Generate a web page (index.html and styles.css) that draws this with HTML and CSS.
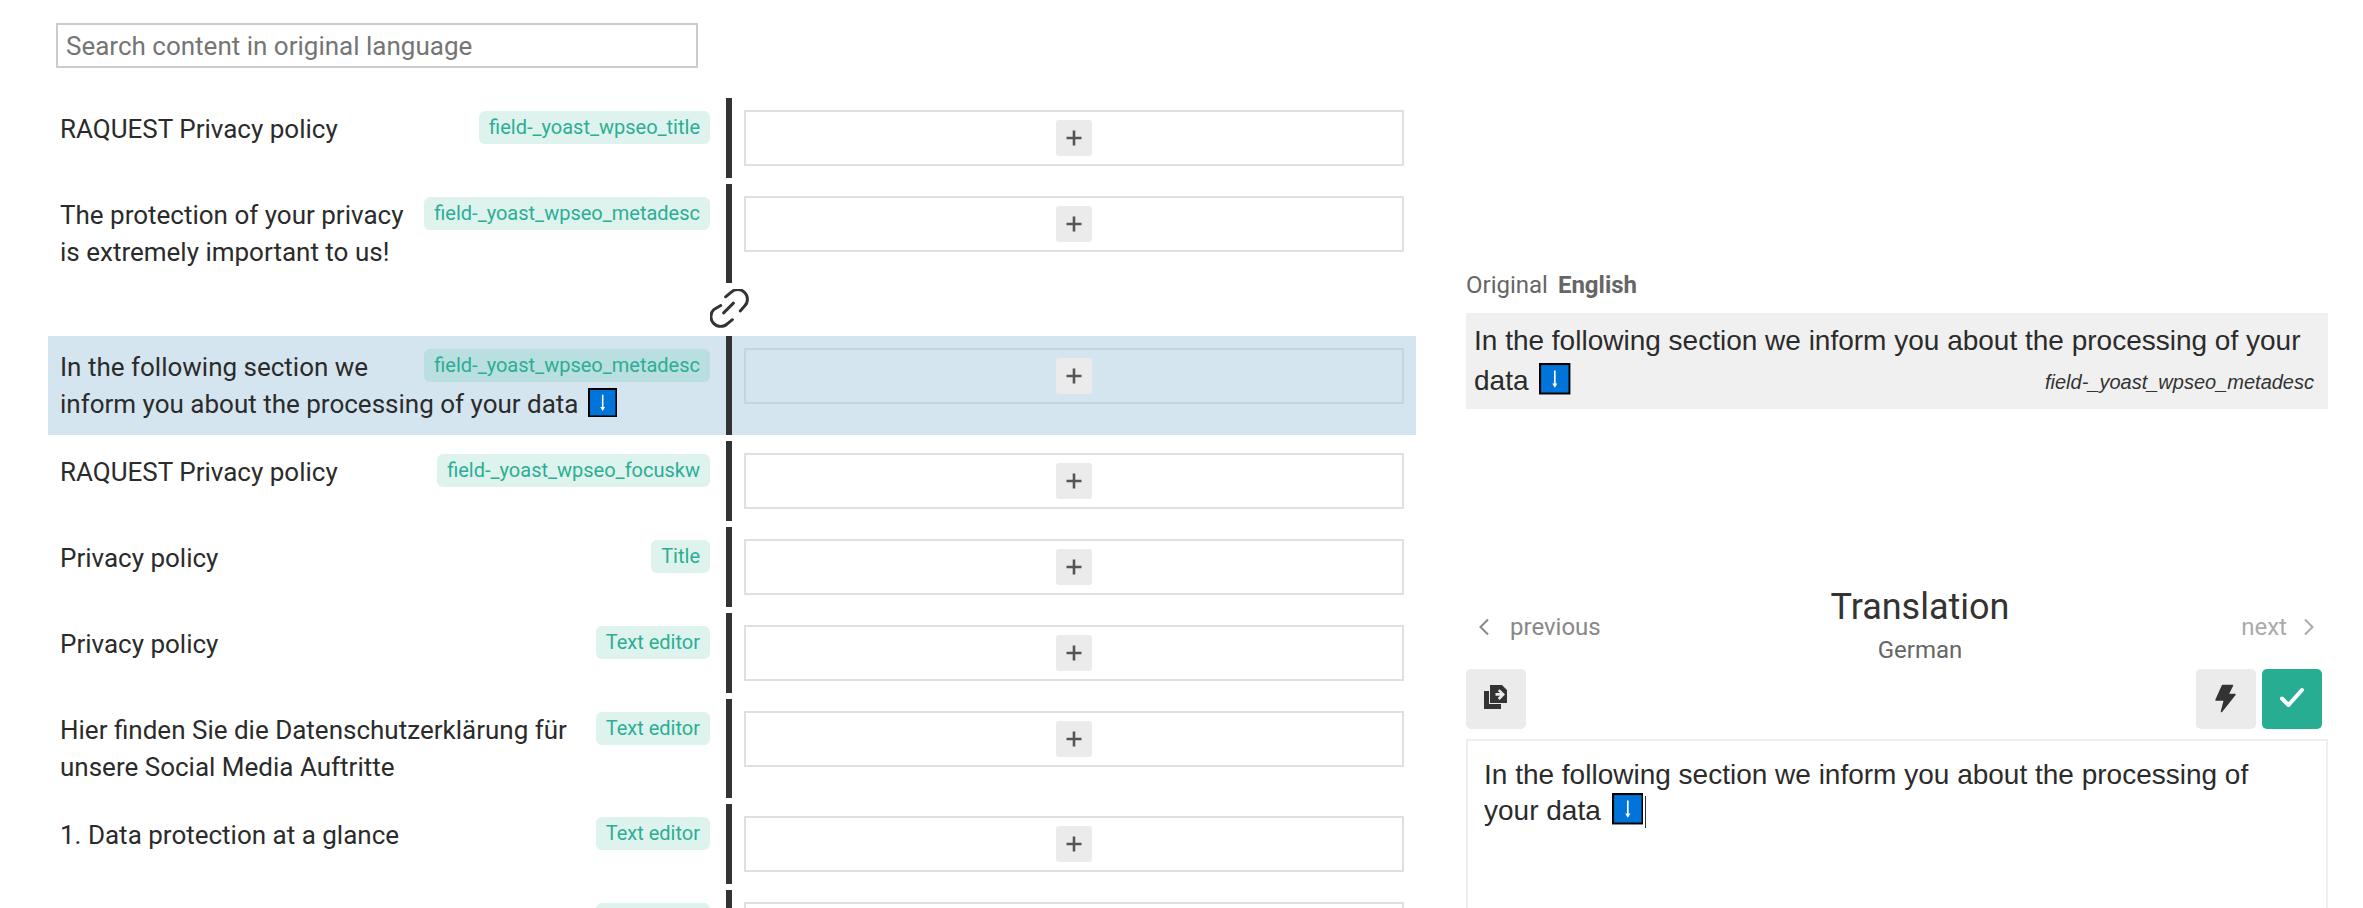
FILE: index.html
```html
<!DOCTYPE html>
<html lang="en">
<head>
<meta charset="utf-8">
<title>Translation editor</title>
<link rel="stylesheet" href="styles.css">
</head>
<body>
<svg class="sprite" width="0" height="0">
  <symbol id="key" viewBox="0 0 30 30">
    <rect x="1" y="1" width="28" height="28" fill="#0074d9" stroke="#000" stroke-width="2"/>
    <path d="M15 7v15" stroke="#fff" stroke-width="1.6"/>
    <path d="M12.6 19.5h4.8L15 23.5z" fill="#fff"/>
  </symbol>
  <symbol id="plus" viewBox="0 0 16 16">
    <path d="M8 .5v15M.5 8h15" stroke="#555" stroke-width="2.6" fill="none"/>
  </symbol>
</svg>
<main class="page">
  <section class="list">
    <input class="search" type="text" placeholder="Search content in original language">

    <div class="row">
      <div class="source"><span class="tag">field-_yoast_wpseo_title</span>RAQUEST Privacy policy</div>
      <div class="target"><div class="box"><button class="add"><svg class="plus"><use href="#plus"/></svg></button></div></div>
    </div>
    <div class="row">
      <div class="source"><span class="tag">field-_yoast_wpseo_metadesc</span>The protection of your privacy is extremely important to us!</div>
      <div class="target"><div class="box"><button class="add"><svg class="plus"><use href="#plus"/></svg></button></div></div>
    </div>
    <div class="link">
      <svg class="link-icon" viewBox="0 0 40 40"><path d="M16 8l5.500-4.500A9.500 9.500 0 0 1 35.500 17.500L31 22.500M23 31.500l-5 4A9.500 9.500 0 0 1 4 21l7-4M14 24.500L24 14.500"/></svg>
    </div>
    <div class="row active">
      <div class="source"><span class="tag">field-_yoast_wpseo_metadesc</span>In the following section we inform you about the processing of your data <svg class="key"><use href="#key"/></svg></div>
      <div class="target"><div class="box"><button class="add"><svg class="plus"><use href="#plus"/></svg></button></div></div>
    </div>
    <div class="row">
      <div class="source"><span class="tag">field-_yoast_wpseo_focuskw</span>RAQUEST Privacy policy</div>
      <div class="target"><div class="box"><button class="add"><svg class="plus"><use href="#plus"/></svg></button></div></div>
    </div>
    <div class="row">
      <div class="source"><span class="tag">Title</span>Privacy policy</div>
      <div class="target"><div class="box"><button class="add"><svg class="plus"><use href="#plus"/></svg></button></div></div>
    </div>
    <div class="row">
      <div class="source"><span class="tag">Text editor</span>Privacy policy</div>
      <div class="target"><div class="box"><button class="add"><svg class="plus"><use href="#plus"/></svg></button></div></div>
    </div>
    <div class="row">
      <div class="source"><span class="tag">Text editor</span>Hier finden Sie die Datenschutzerklärung für unsere Social Media Auftritte</div>
      <div class="target"><div class="box"><button class="add"><svg class="plus"><use href="#plus"/></svg></button></div></div>
    </div>
    <div class="row">
      <div class="source"><span class="tag">Text editor</span>1. Data protection at a glance</div>
      <div class="target"><div class="box"><button class="add"><svg class="plus"><use href="#plus"/></svg></button></div></div>
    </div>
    <div class="row">
      <div class="source"><span class="tag">Text editor</span></div>
      <div class="target"><div class="box"><button class="add"><svg class="plus"><use href="#plus"/></svg></button></div></div>
    </div>
  </section>

  <aside class="panel">
    <p class="lang">Original <b>English</b></p>
    <div class="original">In the following section we inform you about the processing of your data <svg class="key"><use href="#key"/></svg><em class="field">field-_yoast_wpseo_metadesc</em></div>

    <header class="head">
      <a class="nav prev"><svg class="chev" viewBox="0 0 12 18"><path d="M10 1.500L2.500 9l7.500 7.500"/></svg>previous</a>
      <div class="title">
        <h2>Translation</h2>
        <p>German</p>
      </div>
      <a class="nav next">next<svg class="chev" viewBox="0 0 12 18"><path d="M2 1.500L9.500 9 2 16.500"/></svg></a>
    </header>

    <div class="tools">
      <button class="tool">
        <svg class="tool-icon" viewBox="0 0 60 60">
          <path fill="#333" d="M18 22h5v13h12v5H18z"/>
          <path fill="#333" fill-rule="evenodd" d="M24 16h12l5 5v13H24zM29.500 24v2.800h4.500l-2.200 2.200 1.900 1.900 5.300-5.400-5.300-5.300-1.900 1.900 2.200 1.900z"/>
        </svg>
      </button>
      <span class="spacer"></span>
      <button class="tool">
        <svg class="tool-icon" viewBox="0 0 60 60"><path fill="#333" stroke="#333" stroke-width="1.500" stroke-linejoin="round" d="M26.500 16.500H36.500L32 25.500H39L25.500 42.500L28.500 31H20z"/></svg>
      </button>
      <button class="tool ok">
        <svg class="tool-icon" viewBox="0 0 60 60"><path fill="none" stroke="#fff" stroke-width="4" stroke-linecap="round" stroke-linejoin="round" d="M20 29.500L26.500 36 40 21"/></svg>
      </button>
    </div>

    <div class="editor">In the following section we inform you about the processing of your data <svg class="key"><use href="#key"/></svg><span class="caret"></span></div>
  </aside>
</main>
</body>
</html>
```
FILE: styles.css
```css
* { box-sizing: border-box; }
html, body { margin: 0; height: 100%; overflow: hidden; background: #fff; }
body { font-family: Roboto, "Liberation Sans", sans-serif; color: #2b2b2b; }
p, h2 { margin: 0; }
.sprite { position: absolute; }
.page { display: flex; height: 908px; overflow: hidden; }

.list { width: 1368px; margin-left: 48px; padding-top: 23px; flex: none; }
.search {
  display: block; width: 642px; height: 45px; margin: 0 0 30px 8px; padding: 0 8px;
  border: 2px solid #ccc; border-radius: 0; outline: 0;
  font: 26px/41px Roboto, sans-serif; color: #333;
}
.search::placeholder { color: #757575; opacity: 1; }

.row { display: flex; margin-bottom: 6px; }
.source {
  width: 684px; flex: none; padding: 13px 16px 12px 12px;
  border-right: 6px solid #333;
  font-size: 26px; line-height: 37px; color: #2b2b2b;
}
.tag {
  float: right; margin: 0 0 0 20px; padding: 0 10px; height: 33px;
  background: #dff3ee; color: #2bae94; border-radius: 6px;
  font-size: 20px; line-height: 32px;
}
.target { flex: 1; padding: 12px 12px 12px 12px; }
.box {
  height: 56px; border: 2px solid #e0e0e0;
  display: flex; align-items: center; justify-content: center;
}
.add {
  width: 36px; height: 36px; padding: 0; border: 0; border-radius: 3px; background: #ebebeb;
  display: flex; align-items: center; justify-content: center;
}
.plus { width: 16px; height: 16px; }
.active { background: #d5e5ef; }
.active .tag { background: #badfe0; }
.active .box { border-color: #c9d3dd; }

.link { height: 47px; margin-top: 0; padding-left: 662px; }
.link-icon { display: block; width: 39px; height: 39px; margin-top: 1px; fill: none; stroke: #333; stroke-width: 3; stroke-linecap: round; stroke-linejoin: round; }

.key { width: 1.13em; height: 1.13em; margin-left: 3px; vertical-align: -0.17em; }

.panel { width: 862px; margin-left: 50px; flex: none; padding-top: 270px; }
.lang { font-size: 24px; line-height: 30px; color: #666; margin-bottom: 13px; }
.lang b { margin-left: 4px; font-weight: 700; }
.original {
  height: 96px; padding: 8px 14px 8px 8px; background: #f0f0f0;
  font-family: "Liberation Sans", Arial, sans-serif; font-size: 28px; line-height: 40px; color: #2b2b2b;
}
.field { float: right; font-size: 20px; line-height: 42px; color: #333; }

.head { display: flex; align-items: flex-start; justify-content: space-between; margin-top: 178px; height: 82px; }
.nav { display: flex; align-items: center; gap: 16px; margin-top: 24px; font-size: 24px; line-height: 32px; color: #888; }
.prev { padding-left: 12px; width: 246px; gap: 20px; }
.next { padding-right: 13px; width: 200px; justify-content: flex-end; color: #aaa; }
.chev { width: 12px; height: 18px; fill: none; stroke: currentColor; stroke-width: 2; }
.title { text-align: center; }
.title h2 { font-size: 36px; line-height: 40px; font-weight: 400; color: #333; }
.title p { font-size: 24px; line-height: 30px; margin-top: 8px; color: #666; }

.tools { display: flex; gap: 6px; padding-right: 6px; }
.spacer { flex: 1; }
.tool { width: 60px; height: 60px; padding: 0; border: 0; border-radius: 5px; background: #ebebeb; }
.tool.ok { background: #27ae92; }
.tool-icon { display: block; width: 60px; height: 60px; }

.editor {
  margin-top: 10px; height: 400px; padding: 16px 16px; border: 2px solid #eee;
  font-family: "Liberation Sans", Arial, sans-serif; font-size: 28px; line-height: 36px; color: #2b2b2b;
}
.caret { display: inline-block; height: 32px; margin-left: 2px; border-left: 1px solid #333; vertical-align: -8px; }
```
